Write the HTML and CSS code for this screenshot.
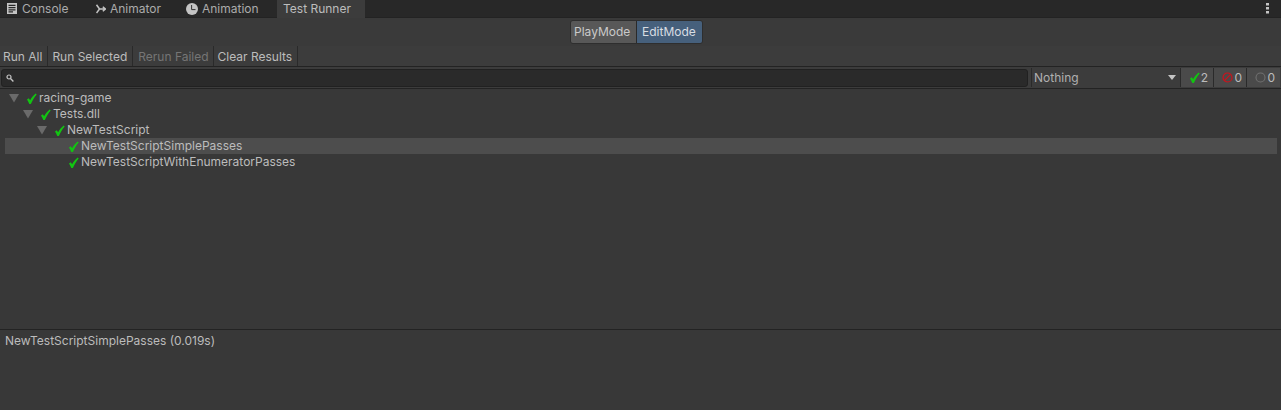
FILE: index.html
```html
<!DOCTYPE html>
<html lang="en">
<head>
<meta charset="utf-8">
<title>Test Runner</title>
<link rel="stylesheet" href="styles.css">
</head>
<body>
<svg class="defs" width="0" height="0" aria-hidden="true">
  <symbol id="check" viewBox="0 0 13 13"><path d="M2 7.6 L3.8 6.3 L5.1 8.3 C6.6 5.6 8.4 3.4 10.7 1.6 L11.7 2.4 C9.4 5 7.4 8.3 5.9 12 L4.3 12 C3.7 10.4 2.9 9 2 7.6Z" fill="#12c412"/></symbol>
  <symbol id="arrow" viewBox="0 0 10 10"><path d="M0 1H10L5 9.5Z" fill="#6a6a6a"/></symbol>
</svg>
<div class="window">
  <nav class="tabs">
    <div class="tab tab-console">
      <svg class="tab-icon" width="10" height="11" viewBox="0 0 10 11"><path d="M0 0H10V11H0Z M1.5 1.8V3H8.5V1.8Z M1.5 4V5.2H8.5V4Z M1.5 6.2V7.4H8.5V6.2Z M1.5 8.2V9.4H6V8.2Z" fill="#c4c4c4" fill-rule="evenodd"/></svg>
      <span>Console</span>
    </div>
    <div class="tab tab-animator">
      <svg class="tab-icon" width="10" height="10" viewBox="0 0 10 10"><path d="M.5 .8 L3.5 5 H9 M.5 9 L3.5 5 M6.8 2.8 L9.4 5 L6.8 7.2" fill="none" stroke="#c4c4c4" stroke-width="1.5"/></svg>
      <span>Animator</span>
    </div>
    <div class="tab tab-animation">
      <svg class="tab-icon" width="12" height="12" viewBox="0 0 12 12"><circle cx="6" cy="6" r="6" fill="#c4c4c4"/><path d="M5.6 2V6.6H9.5" fill="none" stroke="#333" stroke-width="1"/></svg>
      <span>Animation</span>
    </div>
    <div class="tab tab-active">Test Runner</div>
    <div class="tab-spacer"></div>
    <svg class="tab-menu" width="3" height="11" viewBox="0 0 3 11"><path d="M0 0H3V2.4H0ZM0 4H3V6.4H0ZM0 8H3V10.4H0Z" fill="#c4c4c4"/></svg>
  </nav>
  <div class="mode-row">
    <div class="mode-group">
      <div class="mode mode-play">PlayMode</div>
      <div class="mode mode-edit">EditMode</div>
    </div>
  </div>
  <div class="action-row">
    <div class="action action-first">Run All</div>
    <div class="action">Run Selected</div>
    <div class="action action-disabled">Rerun Failed</div>
    <div class="action">Clear Results</div>
  </div>
  <div class="filter-row">
    <div class="search">
      <svg width="8" height="8" viewBox="0 0 8 8"><circle cx="3" cy="3" r="2" fill="none" stroke="#c4c4c4" stroke-width="1.2"/><path d="M4.5 4.5 L7.4 7.4" stroke="#c4c4c4" stroke-width="1.4"/></svg>
    </div>
    <div class="dropdown">
      <span>Nothing</span>
      <svg width="8" height="5" viewBox="0 0 8 5"><path d="M0 0H8L4 5Z" fill="#c4c4c4"/></svg>
    </div>
    <div class="counter counter-pass">
      <svg width="13" height="13"><use href="#check"/></svg><span>2</span>
    </div>
    <div class="counter counter-fail">
      <svg width="11" height="11" viewBox="0 0 11 11"><circle cx="5.5" cy="5.5" r="4.5" fill="none" stroke="#d0101a" stroke-width="1.2"/><path d="M2.4 8.6 L8.6 2.4" stroke="#d0101a" stroke-width="1.2"/></svg><span>0</span>
    </div>
    <div class="counter counter-skip">
      <svg width="11" height="11" viewBox="0 0 11 11"><circle cx="5.5" cy="5.5" r="4.5" fill="none" stroke="#707070" stroke-width="1.1"/></svg><span>0</span>
    </div>
  </div>
  <main class="tree">
    <div class="row depth-0"><svg class="arrow" width="10" height="10"><use href="#arrow"/></svg><svg class="check" width="13" height="13"><use href="#check"/></svg><span>racing-game</span></div>
    <div class="row depth-1"><svg class="arrow" width="10" height="10"><use href="#arrow"/></svg><svg class="check" width="13" height="13"><use href="#check"/></svg><span>Tests.dll</span></div>
    <div class="row depth-2"><svg class="arrow" width="10" height="10"><use href="#arrow"/></svg><svg class="check" width="13" height="13"><use href="#check"/></svg><span>NewTestScript</span></div>
    <div class="row depth-3 row-selected"><svg class="check" width="13" height="13"><use href="#check"/></svg><span>NewTestScriptSimplePasses</span></div>
    <div class="row depth-3"><svg class="check" width="13" height="13"><use href="#check"/></svg><span>NewTestScriptWithEnumeratorPasses</span></div>
  </main>
  <footer class="details">NewTestScriptSimplePasses (0.019s)</footer>
</div>
</body>
</html>
```
FILE: styles.css
```css
* { box-sizing: border-box; }
html, body { margin: 0; height: 100%; }
body {
  background: #383838;
  color: #bcbcbc;
  font: 12px/16px Inter, "Liberation Sans", sans-serif;
  overflow: hidden;
}
.defs { display: block; height: 0; }
.window { display: flex; flex-direction: column; height: 410px; }

.tabs {
  display: flex;
  align-items: center;
  height: 18px;
  background: #282828;
  border-bottom: 1px solid #232323;
  flex: none;
}
.tab { display: flex; align-items: center; height: 18px; color: #ababab; }
.tab-icon { flex: none; }
.tab-console { padding-left: 7px; width: 96px; gap: 5px; }
.tab-animator { width: 90px; gap: 4px; }
.tab-animation { width: 91px; gap: 4px; }
.tab-active { width: 88px; padding-left: 6px; background: #3c3c3c; color: #bcbcbc; }
.tab-spacer { flex: 1; }
.tab-menu { margin-right: 12px; }

.mode-row {
  display: flex;
  justify-content: center;
  height: 28px;
  padding-top: 2px;
  background: #3a3a3a;
  flex: none;
}
.mode-group {
  display: flex;
  height: 24px;
  border: 1px solid #2e2e2e;
  border-radius: 3px;
  overflow: hidden;
  margin-right: 8px;
}
.mode { display: flex; align-items: center; color: #cacaca; }
.mode-play { width: 66px; padding-left: 3px; background: #585858; border-right: 1px solid #2a2a2a; }
.mode-edit { width: 65px; padding-left: 5px; background: #46607c; color: #d8dde3; }

.action-row {
  display: flex;
  height: 21px;
  background: #3c3c3c;
  border-bottom: 1px solid #232323;
  flex: none;
}
.action {
  display: flex;
  align-items: center;
  padding: 1px 5px 0 4px;
  border-right: 1px solid #2a2a2a;
}
.action-first { padding-left: 3px; }
.action-disabled { padding-left: 5px; padding-right: 4px; color: #757575; }

.filter-row {
  display: flex;
  align-items: stretch;
  height: 22px;
  padding: 1px 1px 1px 0;
  background: #3c3c3c;
  border-bottom: 1px solid #232323;
  flex: none;
}
.search {
  flex: 1;
  display: flex;
  align-items: center;
  height: 18px;
  margin: 1px 3px 0 1px;
  padding-left: 4px;
  background: #2a2a2a;
  border: 1px solid #212121;
  border-radius: 3px;
}
.dropdown {
  display: flex;
  align-items: center;
  justify-content: space-between;
  width: 150px;
  padding: 0 4px 0 2px;
  border-left: 1px solid #2a2a2a;
  border-right: 1px solid #2a2a2a;
  color: #b0b0b0;
}
.counter {
  display: flex;
  align-items: center;
  justify-content: flex-end;
  gap: 1px;
  width: 33px;
  padding-right: 5px;
  background: #4a4a4a;
  border-right: 1px solid #2a2a2a;
}
.counter-pass { gap: 0; }
.counter-fail { padding-right: 4px; }
.counter-skip { border-right: 0; }

.tree { flex: 1; padding: 1px 4px 0 5px; border-bottom: 1px solid #232323; min-height: 0; }
.row { display: flex; align-items: center; height: 16px; white-space: nowrap; }
.arrow { flex: none; margin-right: 6px; }
.check { flex: none; margin-right: 1px; }
.depth-0 { padding-left: 4px; }
.depth-1 { padding-left: 18px; }
.depth-2 { padding-left: 32px; }
.depth-3 { padding-left: 62px; }
.row-selected { background: #4d4d4d; }

.details { height: 80px; padding: 3px 5px 0; flex: none; }
```
